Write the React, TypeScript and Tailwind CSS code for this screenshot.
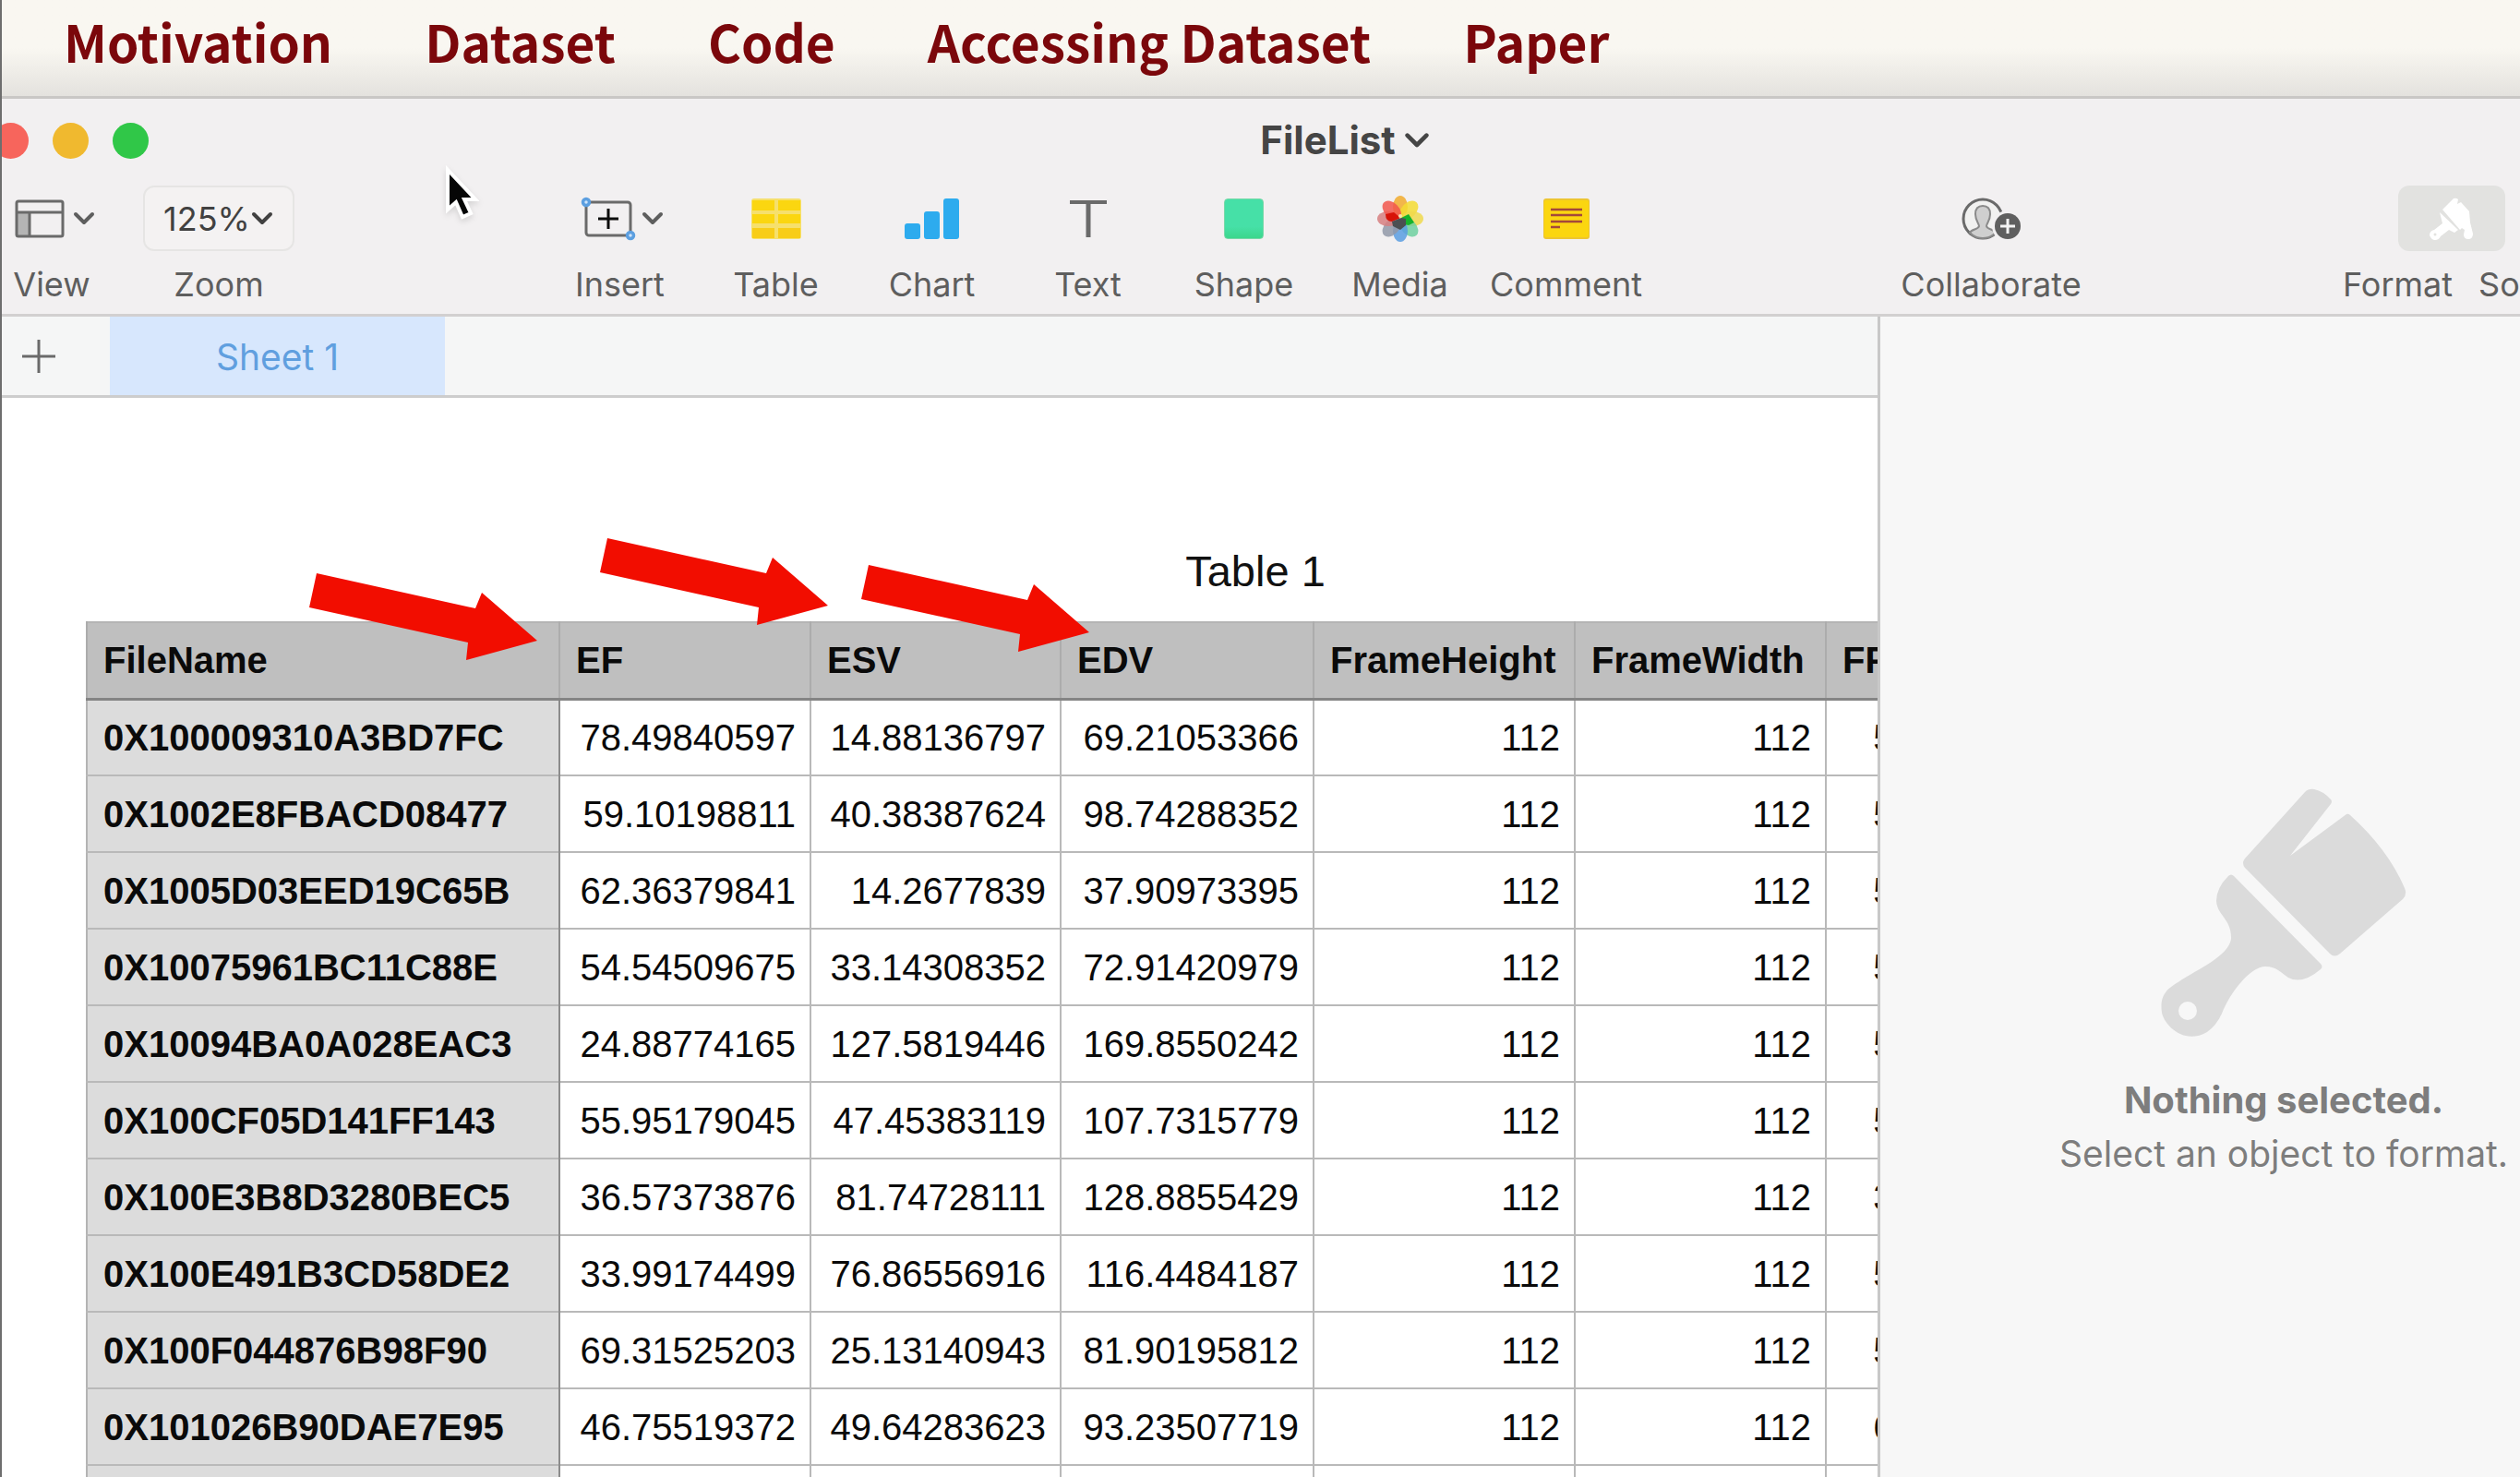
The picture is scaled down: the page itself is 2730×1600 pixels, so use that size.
import type { ReactNode } from 'react'

type Row = {
    file: string,
    ef: string,
    esv: string,
    edv: string,
    height: string,
    width: string,
    fps: string
}

const links = ['Motivation', 'Dataset', 'Code', 'Accessing Dataset', 'Paper']

const rows: Row[] = [
    { file: '0X100009310A3BD7FC', ef: '78.49840597', esv: '14.88136797', edv: '69.21053366', height: '112', width: '112', fps: '50' },
    { file: '0X1002E8FBACD08477', ef: '59.10198811', esv: '40.38387624', edv: '98.74288352', height: '112', width: '112', fps: '50' },
    { file: '0X1005D03EED19C65B', ef: '62.36379841', esv: '14.2677839', edv: '37.90973395', height: '112', width: '112', fps: '50' },
    { file: '0X10075961BC11C88E', ef: '54.54509675', esv: '33.14308352', edv: '72.91420979', height: '112', width: '112', fps: '50' },
    { file: '0X10094BA0A028EAC3', ef: '24.88774165', esv: '127.5819446', edv: '169.8550242', height: '112', width: '112', fps: '50' },
    { file: '0X100CF05D141FF143', ef: '55.95179045', esv: '47.45383119', edv: '107.7315779', height: '112', width: '112', fps: '50' },
    { file: '0X100E3B8D3280BEC5', ef: '36.57373876', esv: '81.74728111', edv: '128.8855429', height: '112', width: '112', fps: '30' },
    { file: '0X100E491B3CD58DE2', ef: '33.99174499', esv: '76.86556916', edv: '116.4484187', height: '112', width: '112', fps: '50' },
    { file: '0X100F044876B98F90', ef: '69.31525203', esv: '25.13140943', edv: '81.90195812', height: '112', width: '112', fps: '50' },
    { file: '0X101026B90DAE7E95', ef: '46.75519372', esv: '49.64283623', edv: '93.23507719', height: '112', width: '112', fps: '60' },
    { file: '', ef: '', esv: '', edv: '', height: '', width: '', fps: '' },
]

const columns = [
    { name: 'FileName', size: 'w-[512px]' },
    { name: 'EF', size: 'w-[272px]' },
    { name: 'ESV', size: 'w-[271px]' },
    { name: 'EDV', size: 'w-[274px]' },
    { name: 'FrameHeight', size: 'w-[283px]' },
    { name: 'FrameWidth', size: 'w-[272px]' },
    { name: 'FPS', size: 'w-[112px]' },
]

function Chevron({ className }: { className: string }) {
    return (
        <svg viewBox="0 0 26 18" className={className} fill="none" stroke="currentColor" strokeWidth="4" strokeLinecap="round" strokeLinejoin="round">
            <path d="M4 4l9 9 9-9" />
        </svg>
    )
}

function ViewIcon() {
    return (
        <svg viewBox="0 0 54 42" className="h-[42px] w-[54px]" fill="none" stroke="#6a6a6a" strokeWidth="3">
            <path d="M3 15h13v24H3z" fill="#b4b4b4" stroke="none" />
            <rect x="2" y="2" width="50" height="38" rx="2" />
            <path d="M2 14h50M16 14v26" />
        </svg>
    )
}

function InsertIcon() {
    return (
        <svg viewBox="0 0 62 50" className="h-[50px] w-[62px]" fill="none">
            <rect x="7" y="7" width="48" height="36" rx="3" stroke="#6a6a6a" strokeWidth="3" />
            <path d="M20 25h22M31 14v22" stroke="#0c0c0c" strokeWidth="3" />
            <circle cx="7" cy="7" r="3.5" fill="#cfe4fb" stroke="#5c9fe0" strokeWidth="3.5" />
            <circle cx="55" cy="43" r="3.5" fill="#cfe4fb" stroke="#5c9fe0" strokeWidth="3.5" />
        </svg>
    )
}

function TableIcon() {
    return (
        <svg viewBox="0 0 54 44" className="h-[44px] w-[54px]">
            <rect width="54" height="44" rx="3" fill="#f6e06c" />
            <path d="M1 2h24v11H1zM29 2h24v11H29zM1 17h24v10H1zM29 17h24v10H29z" fill="#fbd610" />
            <path d="M1 32h24v11H1zM29 32h24v11H29z" fill="#f8cd18" />
        </svg>
    )
}

function ChartIcon() {
    return (
        <svg viewBox="0 0 60 44" className="h-[44px] w-[60px]" fill="#2dabee">
            <rect x="0" y="27" width="17" height="17" rx="3" />
            <rect x="21" y="14" width="17" height="30" rx="3" />
            <rect x="42" y="0" width="17" height="44" rx="3" />
        </svg>
    )
}

function TextIcon() {
    return (
        <svg viewBox="0 0 40 40" className="h-10 w-10" fill="none" stroke="#6a6a6a">
            <path d="M0 2h40" strokeWidth="4" />
            <path d="M20 2v38" strokeWidth="5" />
        </svg>
    )
}

function ShapeIcon() {
    return <span className="block h-11 w-[43px] rounded-sm border border-[#78d8a8] bg-gradient-to-b from-[#46e0a7] from-70% to-[#3cd78c]" />
}

const petals = [
    { fill: '#f2ac2e', angle: 0 },
    { fill: '#f5dc32', angle: 45 },
    { fill: '#f0d94e', angle: 90 },
    { fill: '#6fd0a0', angle: 135 },
    { fill: '#5a9ee2', angle: 180 },
    { fill: '#9299a8', angle: 225 },
    { fill: '#d77f80', angle: 270 },
    { fill: '#f2564c', angle: 315 },
]

function MediaIcon() {
    return (
        <svg viewBox="0 0 50 50" className="h-[50px] w-[50px]">
            {petals.map((petal) => (
                <ellipse key={petal.angle} cx="25" cy="12" rx="8" ry="12" fill={petal.fill} fillOpacity="0.85" transform={`rotate(${petal.angle} 25 25)`} />
            ))}
            <path d="M25 24l-7-6-9 2q0 8 7 8z" fill="#d71308" />
            <path d="M26 24l8-4 6 9-6 3-5-1z" fill="#17b32c" />
            <path d="M26 24l5 1 0 7-6 5-8-4-1-5z" fill="#4b4f52" />
            <circle cx="25" cy="22" r="2" fill="#f7e4b0" />
        </svg>
    )
}

function CommentIcon() {
    return (
        <svg viewBox="0 0 50 44" className="h-11 w-[50px]">
            <rect width="50" height="44" rx="3" fill="#edc531" />
            <rect x="1" y="2" width="48" height="40" rx="2" fill="#fbd610" />
            <path d="M8 12h34M8 18h34M8 25h34M8 31h10" stroke="#a4483a" strokeWidth="2.5" />
        </svg>
    )
}

function CollaborateIcon() {
    return (
        <svg viewBox="0 0 66 48" className="h-12 w-[66px]" fill="none">
            <circle cx="24" cy="24" r="21" fill="#f1f1f0" stroke="#6a6a6a" strokeWidth="3" />
            <path d="M10 39c2-4 9-3 10-7 0-3-4-6-4-13 0-6 3-9 8-9s8 3 8 9c0 7-4 10-4 13 1 4 8 3 10 7-7 8-21 8-28 0z" fill="#cfcfcf" stroke="#8a8a8a" strokeWidth="2" />
            <circle cx="51" cy="32" r="17" fill="#f2f0f1" />
            <circle cx="51" cy="32" r="14" fill="#5f5f5f" />
            <path d="M43 32h16M51 24v16" stroke="#f4f4f4" strokeWidth="3" />
        </svg>
    )
}

function BrushIcon() {
    return (
        <svg viewBox="0 0 48 46" className="h-[46px] w-12" fill="#fff">
            <path d="M14 13L26 1q3-1 5 1l-1 5 4-2 9 10 1 12 3 12q0 6-5 6t-5-5l1-5-3-2-2 2z" />
            <path d="M11 16l20 19-4 3-6-3-9 7q-2 4-6 4t-6-5q0-5 5-6l9-7-2-8z" />
            <circle cx="6" cy="40" r="1.5" fill="#e2e2e0" />
        </svg>
    )
}

function LargeBrush() {
    return (
        <svg viewBox="0 0 266 271" className="h-[271px] w-[266px]" fill="#dbdbdb">
            <path d="M156 4Q160 0 166 1Q176 3 184 12Q186 14 184 17L140 73L201 28Q203 27 205 29Q246 66 264 108Q267 115 262 120L194 179Q188 184 183 179L91 86Q87 81 91 76Z" />
            <path d="M73 95Q76 92 79 95L173 190Q176 193 173 196Q153 213 138 205C130 200 126 193 113 193C97 193 75 221 66 244Q60 257 50 264C24 279 3 255 1 243C-2 222 9 216 20 209C40 196 74 181 76 163C77 142 61 138 60 122Q60 108 73 95ZM29 231a10 10 0 1 0 0 20a10 10 0 1 0 0-20Z" fillRule="evenodd" />
        </svg>
    )
}

function Arrow({ className }: { className: string }) {
    return (
        <svg viewBox="0 0 250 96" className={`absolute h-24 w-[250px] ${className}`} fill="#f20d00">
            <path d="M10 1L182 39L189 22L249 74L172 95L174 76L2 38Z" />
        </svg>
    )
}

function Tool({ label, size, children }: { label: string, size: string, children: ReactNode }) {
    return (
        <button className={`flex flex-col items-center gap-4 ${size}`}>
            <span className="flex h-[71px] items-center justify-center">{children}</span>
            <span className="leading-10">{label}</span>
        </button>
    )
}

function Toolbar() {
    return (
        <div className="flex items-start justify-between pb-3 text-[36px] text-[#5e5e5e]">
            <div className="flex">
                <Tool label="View" size="w-[108px]">
                    <span className="flex items-center gap-2 pl-2">
                        <ViewIcon />
                        <Chevron className="w-[26px]" />
                    </span>
                </Tool>
                <div className="flex flex-col items-center gap-4 pl-[45px]">
                    <button aria-labelledby="zoom-label" className="flex h-[71px] w-[164px] items-center justify-center rounded-xl border-2 border-[#e6e5e4] bg-[#f4f2f2] text-[#414141]">
                        125%
                        <Chevron className="w-[26px]" />
                    </button>
                    <span id="zoom-label" className="leading-10">Zoom</span>
                </div>
            </div>
            <div className="flex">
                <Tool label="Insert" size="w-[169px]">
                    <span className="flex items-center gap-1 pl-1">
                        <InsertIcon />
                        <Chevron className="w-[26px]" />
                    </span>
                </Tool>
                <Tool label="Table" size="w-[169px]"><TableIcon /></Tool>
                <Tool label="Chart" size="w-[169px]"><ChartIcon /></Tool>
                <Tool label="Text" size="w-[169px]"><TextIcon /></Tool>
                <Tool label="Shape" size="w-[169px]"><ShapeIcon /></Tool>
                <Tool label="Media" size="w-[169px]"><MediaIcon /></Tool>
                <Tool label="Comment" size="w-[191px]"><CommentIcon /></Tool>
            </div>
            <div className="flex w-[670px] justify-between">
                <Tool label="Collaborate" size="w-[194px]"><CollaborateIcon /></Tool>
                <div className="flex w-[192px] flex-col gap-4">
                    <button aria-label="Format panel" className="ml-[60px] flex h-[71px] w-[116px] items-center justify-center rounded-xl bg-[#e2e2e0]">
                        <BrushIcon />
                    </button>
                    <div className="flex gap-7 leading-10">
                        <button>Format</button>
                        <button>So</button>
                    </div>
                </div>
            </div>
        </div>
    )
}

function FileTable() {
    return (
        <table className="table-fixed border-collapse border-2 border-[#b4b4b4] font-['Liberation_Sans',Arial,sans-serif] text-[40px] leading-10 text-[#0a0a0a]">
            <thead>
                <tr className="h-[83px] border-b-3 border-[#848484] bg-[#bfbfbf]">
                    {columns.map((column) => (
                        <th key={column.name} scope="col" className={`border-x-2 border-x-[#acacac] px-[17px] py-0 text-left font-bold ${column.size}`}>{column.name}</th>
                    ))}
                </tr>
            </thead>
            <tbody>
                {rows.map((row, i) => (
                    <tr key={i} className="h-[83px] border-b-2 border-[#b9b9b9] bg-white text-right">
                        <th scope="row" className="border-r-2 border-[#8c8c8c] border-b-[#b0b0b0] bg-[#dcdcdc] px-[17px] py-0 text-left font-bold">{row.file}</th>
                        <td className="border-r-2 border-[#b9b9b9] px-[15px] py-0">{row.ef}</td>
                        <td className="border-r-2 border-[#b9b9b9] px-[15px] py-0">{row.esv}</td>
                        <td className="border-r-2 border-[#b9b9b9] px-[15px] py-0">{row.edv}</td>
                        <td className="border-r-2 border-[#b9b9b9] px-[15px] py-0">{row.height}</td>
                        <td className="border-r-2 border-[#b9b9b9] px-[15px] py-0">{row.width}</td>
                        <td className="px-[17px] py-0">{row.fps}</td>
                    </tr>
                ))}
            </tbody>
        </table>
    )
}

function Cursor() {
    return (
        <svg viewBox="0 0 40 62" className="absolute top-[179px] left-[477px] h-[62px] w-10 drop-shadow-md" fill="#060606" stroke="#fff" strokeWidth="4">
            <path d="M6 5v43l9-8 7 16 9-4-7-15h12z" />
        </svg>
    )
}

export default function App() {
    return (
        <div className="relative flex h-screen flex-col overflow-hidden border-l-2 border-[#6e6e6e] bg-white font-[Inter,sans-serif]">
            <nav className="flex h-[107px] shrink-0 items-center gap-[100px] border-b-3 border-[#c9c7c5] bg-gradient-to-b from-[#f9f7f1] from-50% to-[#e4e2de] pb-4 pl-[67px] font-['Noto_Sans_CJK_SC',sans-serif] text-[55px] leading-[80px] font-bold text-[#7b070b]">
                {links.map((link) => (
                    <a href="#" key={link} className="whitespace-nowrap">{link}</a>
                ))}
            </nav>

            <header className="shrink-0 border-b-3 border-[#d2d0d0] bg-[#f2f0f1]">
                <div className="flex h-[94px] items-center pb-1">
                    <div className="-ml-[10px] flex shrink-0 gap-[26px]">
                        <button aria-label="Close" className="size-[39px] rounded-full bg-[#f7655c]" />
                        <button aria-label="Minimize" className="size-[39px] rounded-full bg-[#f0b92f]" />
                        <button aria-label="Zoom window" className="size-[39px] rounded-full bg-[#30c748]" />
                    </div>
                    <div className="flex flex-1 justify-center pl-6">
                        <button className="flex items-center gap-2 text-[42px] leading-[48px] font-bold text-[#454545]">
                            FileList
                            <Chevron className="w-[30px]" />
                        </button>
                    </div>
                </div>
                <Toolbar />
            </header>

            <div className="flex min-h-0 flex-1">
                <main className="flex min-w-0 flex-1 flex-col overflow-hidden">
                    <div className="flex h-[88px] shrink-0 border-b-3 border-[#cdcdcd] bg-[#f5f6f6]">
                        <button aria-label="Add sheet" className="flex w-[117px] items-center pl-[22px]">
                            <svg viewBox="0 0 36 36" className="size-9" fill="none" stroke="#6a6a6a" strokeWidth="3">
                                <path d="M0 18h36M18 0v36" />
                            </svg>
                        </button>
                        <button className="w-[363px] bg-[#d7e7fd] pt-1 text-[39px] text-[#609fdf]">Sheet 1</button>
                    </div>
                    <div className="relative flex-1 overflow-hidden pt-40 pl-[91px]">
                        <div className="w-[2534px]">
                            <h2 className="mb-[26px] text-center font-['Liberation_Sans',Arial,sans-serif] text-[47px] leading-[56px] text-[#111]">Table 1</h2>
                            <FileTable />
                        </div>
                        <Arrow className="top-[189px] left-[331px]" />
                        <Arrow className="top-[151px] left-[646px]" />
                        <Arrow className="top-[180px] left-[929px]" />
                    </div>
                </main>

                <aside className="w-[696px] shrink-0 overflow-hidden border-l-3 border-[#c8c8c8] bg-[#f7f7f7]">
                    <div className="flex w-[874px] flex-col items-center pt-[511px] text-[39px] text-[#7d7d7d]">
                        <LargeBrush />
                        <p className="mt-[38px] text-[40px] leading-[58px] font-bold">Nothing selected.</p>
                        <p className="leading-[58px]">Select an object to format.</p>
                    </div>
                </aside>
            </div>

            <Cursor />
        </div>
    )
}
